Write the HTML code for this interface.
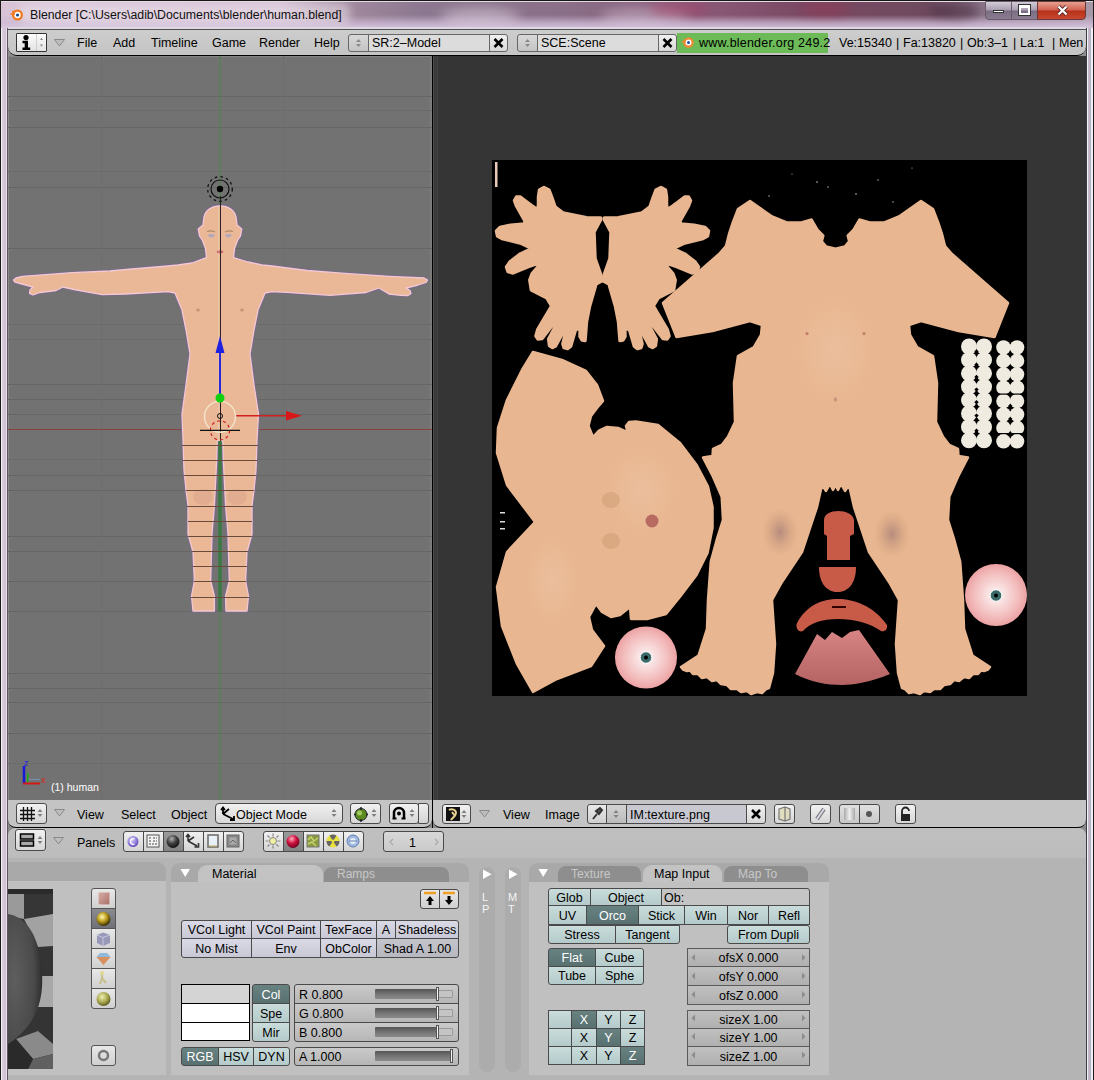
<!DOCTYPE html>
<html><head><meta charset="utf-8">
<style>
*{margin:0;padding:0;box-sizing:border-box}
html,body{width:1094px;height:1080px;overflow:hidden;background:#c0b0c0;font-family:"Liberation Sans",sans-serif;font-size:12px;color:#000}
.a{position:absolute}
.t{position:absolute;white-space:nowrap;line-height:14px}
.b{position:absolute;border:1px solid #555;text-align:center;line-height:16px;white-space:nowrap;overflow:hidden}
</style></head><body>
<!-- title bar -->
<div class="a" id="title" style="left:0;top:0;width:1094px;height:30px;background:linear-gradient(90deg,#d8c4d6 0px,#d4bcd0 280px,#a48ca0 340px,#8c7890 420px,#8a7088 560px,#8a5a78 700px,#7a4a64 800px,#6e4a5e 930px,#8a7488 980px,#a898a8 1094px)"></div>
<div class="a" style="left:0;top:15px;width:1094px;height:13px;background:linear-gradient(180deg,rgba(210,190,215,0) 0,rgba(205,185,212,.75) 60%,rgba(215,200,225,.9) 100%)"></div>
<div class="a" style="left:20px;top:3px;width:330px;height:22px;background:rgba(235,225,235,.55);filter:blur(4px);border-radius:8px"></div>
<div class="a" style="left:440px;top:8px;width:80px;height:18px;background:rgba(225,212,228,.55);filter:blur(6px);border-radius:50%"></div>
<div class="a" style="left:600px;top:8px;width:90px;height:18px;background:rgba(225,210,228,.45);filter:blur(6px);border-radius:50%"></div>
<div class="a" style="left:650px;top:2px;width:60px;height:14px;background:rgba(170,60,100,.45);filter:blur(5px);border-radius:50%"></div>
<div class="a" style="left:800px;top:2px;width:50px;height:14px;background:rgba(160,50,80,.4);filter:blur(5px);border-radius:50%"></div>
<div class="a" style="left:930px;top:3px;width:50px;height:16px;background:rgba(60,30,50,.45);filter:blur(5px);border-radius:50%"></div>
<div class="a" style="left:0;top:0;width:1094px;height:1px;background:#161616"></div>
<div class="a" style="left:1px;top:1px;width:1092px;height:1px;background:#e6dce6"></div>
<div class="a" style="left:8px;top:27px;width:1078px;height:2px;background:#ded6e2"></div>
<!-- frame -->
<div class="a" style="left:0;top:0;width:1px;height:1080px;background:#1a1a1a"></div>
<div class="a" style="left:1px;top:28px;width:7px;height:1052px;background:linear-gradient(90deg,#f4f0f6 0,#f4f0f6 1px,#dcd0de 1px,#d0bcd0 5px,#ece4ee 5px,#ece4ee 6px,#5a5060 6px)"></div>
<div class="a" style="left:1086px;top:28px;width:7px;height:1052px;background:linear-gradient(90deg,#3a3a40 0,#3a3a40 1px,#f4f2f6 1px,#f4f2f6 2px,#c4bccc 2px,#b8b0c0 5px,#f4eef8 5px)"></div>
<div class="a" style="left:1093px;top:0;width:1px;height:1080px;background:#1a1a1a"></div>
<!-- top header -->
<div class="a" style="left:8px;top:46px;width:1078px;height:10px;background:#8e8e8e"></div>
<div class="a" id="hdr1" style="left:8px;top:29px;width:1078px;height:27px;background:linear-gradient(#cdcdcd,#c4c4c4);border-top:1px solid #505050;border-bottom:1px solid #000;border-radius:0 0 9px 9px"></div>
<div class="a" style="left:16px;top:33px;width:31px;height:19px;border:1px solid #333;border-radius:1px;background:linear-gradient(#fafafa,#e4e4e4)"></div>
<div class="a" style="left:36px;top:34px;width:1px;height:17px;background:#d0d0d0"></div>
<svg class="a" style="left:16px;top:33px" width="31" height="19"><circle cx="10" cy="4.6" r="2.6" fill="#000"/><path d="M6.5 7.8h5.5v6.8h2.2v2.4H6.5v-2.4h2.2v-4.4H6.5z" fill="#000"/><path d="M24 7l1.5-2.2 1.5 2.2zM24 11.5l1.5 2.2 1.5-2.2z" fill="#888"/></svg>
<svg class="a" style="left:54px;top:39px" width="11" height="8"><path d="M0.5 0.5H10.5L5.5 7Z" fill="#bdbdbd" stroke="#8a8a8a" stroke-width="1"/></svg>
<div class="t" style="left:77px;top:36px;font-size:12.5px;color:#000;">File</div>
<div class="t" style="left:113px;top:36px;font-size:12.5px;color:#000;">Add</div>
<div class="t" style="left:151px;top:36px;font-size:12.5px;color:#000;">Timeline</div>
<div class="t" style="left:212px;top:36px;font-size:12.5px;color:#000;">Game</div>
<div class="t" style="left:259px;top:36px;font-size:12.5px;color:#000;">Render</div>
<div class="t" style="left:314px;top:36px;font-size:12.5px;color:#000;">Help</div>
<div class="a" style="left:348px;top:34px;width:21px;height:18px;border:1px solid #666;border-radius:3px 0 0 3px;background:linear-gradient(#d8d8d8,#c4c4c4)"></div><svg class="a" style="left:348px;top:34px" width="21" height="18"><path d="M8 8l2.5-3 2.5 3zM8 10l2.5 3 2.5-3z" fill="#8a8a8a"/></svg><div class="a" style="left:368px;top:34px;width:122px;height:18px;border:1px solid #666;background:#dcdcdc"></div><div class="t" style="left:372px;top:36px;font-size:12.5px;color:#000;">SR:2–Model</div><div class="a" style="left:489px;top:34px;width:19px;height:18px;border:1px solid #666;border-radius:0 3px 3px 0;background:linear-gradient(#f0f0f0,#d8d8d8)"></div><svg class="a" style="left:489px;top:34px" width="19" height="18"><path d="M5.5 5l8 8M13.5 5l-8 8" stroke="#000" stroke-width="2.6"/></svg>
<div class="a" style="left:517px;top:34px;width:21px;height:18px;border:1px solid #666;border-radius:3px 0 0 3px;background:linear-gradient(#d8d8d8,#c4c4c4)"></div><svg class="a" style="left:517px;top:34px" width="21" height="18"><path d="M8 8l2.5-3 2.5 3zM8 10l2.5 3 2.5-3z" fill="#8a8a8a"/></svg><div class="a" style="left:537px;top:34px;width:122px;height:18px;border:1px solid #666;background:#dcdcdc"></div><div class="t" style="left:541px;top:36px;font-size:12.5px;color:#000;">SCE:Scene</div><div class="a" style="left:658px;top:34px;width:19px;height:18px;border:1px solid #666;border-radius:0 3px 3px 0;background:linear-gradient(#f0f0f0,#d8d8d8)"></div><svg class="a" style="left:658px;top:34px" width="19" height="18"><path d="M5.5 5l8 8M13.5 5l-8 8" stroke="#000" stroke-width="2.6"/></svg>
<div class="a" style="left:677px;top:33px;width:151px;height:20px;background:#6cba58"></div>
<svg class="a" style="left:680px;top:35px" width="16" height="16"><circle cx="8.5" cy="7.5" r="5.2" fill="#f08a30"/><circle cx="8.5" cy="7.5" r="3" fill="#fff"/><circle cx="8.5" cy="7.5" r="1.5" fill="#2050a0"/><path d="M2 6.5h4" stroke="#f08a30" stroke-width="1.6"/></svg>
<div class="t" style="left:699px;top:36px;font-size:12.5px;color:#000;letter-spacing:0.2px">www.blender.org 249.2</div>
<div class="t" style="left:839px;top:36px;font-size:12.5px;color:#000;">Ve:15340</div>
<div class="t" style="left:896px;top:36px;font-size:12.5px;color:#000;">|</div>
<div class="t" style="left:903px;top:36px;font-size:12.5px;color:#000;">Fa:13820</div>
<div class="t" style="left:960px;top:36px;font-size:12.5px;color:#000;">|</div>
<div class="t" style="left:967px;top:36px;font-size:12.5px;color:#000;">Ob:3–1</div>
<div class="t" style="left:1013px;top:36px;font-size:12.5px;color:#000;">|</div>
<div class="t" style="left:1020px;top:36px;font-size:12.5px;color:#000;">La:1</div>
<div class="t" style="left:1052px;top:36px;font-size:12.5px;color:#000;">|</div>
<div class="t" style="left:1059px;top:36px;font-size:12.5px;color:#000;">Men</div>
<!-- left 3D viewport -->
<div class="a" id="v3d" style="left:8px;top:56px;width:424px;height:744px;background:#727272"></div>
<div class="a" style="left:432px;top:56px;width:1px;height:772px;background:#000"></div>
<div class="a" style="left:8px;top:56px;width:1px;height:744px;background:#8a8a8a"></div><div class="a" style="left:8px;top:56px;width:424px;height:1px;background:#868686"></div><div class="a" style="left:430px;top:56px;width:2px;height:744px;background:#7c7c7c"></div>

<!-- 3D viewport content -->
<svg class="a" style="left:0;top:0" width="1094" height="1080" viewBox="0 0 1094 1080">
<defs><clipPath id="cv"><rect x="8" y="56" width="424" height="744"/></clipPath></defs>
<g clip-path="url(#cv)">
<g stroke="#666" stroke-width="1" fill="none">
<path d="M8 96.5H432M8 127.5H432M8 187.5H432M8 248.5H432M8 384.5H432M8 399.5H432M8 414.5H432M8 475.5H432M8 490.5H432M8 536.5H432M8 551.5H432M8 581.5H432M8 611.5H432M8 673.5H432M8 688.5H432M8 702.5H432M8 733.5H432"/>
</g>
<path d="M8 110.5H432M8 171.5H432M8 324.5H432M8 339.5H432M8 459.5H432M8 763.5H432" stroke="#6b6b6b" stroke-width="1"/>
<path d="M101.5 56V800M283.5 56V800" stroke="#6e6e6e" stroke-width="1"/>
<path d="M8 429.5H432" stroke="#8a4040" stroke-width="1"/>
<path d="M220 56V800" stroke="#4a884a" stroke-width="1.1" opacity=".85"/>
<path fill="none" stroke="#7a6a8c" stroke-width="3" stroke-linejoin="round" d="M220,205.8 C228,205.8 234.5,210 236,217 L237,225 L241.8,229 L240.5,236 L237.5,240.5 L234.5,248.5 L233.5,257.6 L248,262 L262,265 L272,266 L307,270.5 L345,273.4 L389,276.3 L424,278 L427.5,280 L426,282.5 L418,285 L406,288 L410,290.5 L411,293.5 L408,295.5 L400.7,295.3 L389,294 L379,288 L366,292.5 L330,295.3 L287,292.4 L272,291.7 L265,293 L258,310 L254,330 L250,354 L254,385 L258.5,414 L257,440 L256,470 L254,490 L252,506 L252,534 L247,552 L245.6,581 L248.5,596 L247,611 L226,611 L225.6,596 L229.3,581 L228.5,552 L228,534 L225.6,506 L223.3,460 L222.8,441 L217.2,441 L216.7,460 L214.4,506 L212,534 L211.5,552 L210.7,581 L214.4,596 L214.4,611 L193,611 L191.5,596 L194.4,581 L193,552 L188,534 L188,506 L186,490 L184,470 L183,440 L182,414 L186,385 L190,354 L186,330 L182,310 L175,293 L168,291.7 L125,294 L102,294.6 L74,289.5 L63,287 L56,290.5 L40,292.5 L33,295 L29.5,293.5 L30,290 L33,287 L22,284 L15,282 L13.5,280 L16,278 L22.6,276.3 L72,272.7 L110,271 L132,269 L168,266 L178,265 L192,263 L206.5,257.6 L205.5,248.5 L202.5,240.5 L199.5,236 L198.2,229 L203,225 L204,217 C205.5,210 212,205.8 220,205.8 Z"/>
<path id="body" fill="#eab896" stroke="#f2c8d2" stroke-width="1.3" stroke-linejoin="round" d="M220,205.8 C228,205.8 234.5,210 236,217 L237,225 L241.8,229 L240.5,236 L237.5,240.5 L234.5,248.5 L233.5,257.6 L248,262 L262,265 L272,266 L307,270.5 L345,273.4 L389,276.3 L424,278 L427.5,280 L426,282.5 L418,285 L406,288 L410,290.5 L411,293.5 L408,295.5 L400.7,295.3 L389,294 L379,288 L366,292.5 L330,295.3 L287,292.4 L272,291.7 L265,293 L258,310 L254,330 L250,354 L254,385 L258.5,414 L257,440 L256,470 L254,490 L252,506 L252,534 L247,552 L245.6,581 L248.5,596 L247,611 L226,611 L225.6,596 L229.3,581 L228.5,552 L228,534 L225.6,506 L223.3,460 L222.8,441 L217.2,441 L216.7,460 L214.4,506 L212,534 L211.5,552 L210.7,581 L214.4,596 L214.4,611 L193,611 L191.5,596 L194.4,581 L193,552 L188,534 L188,506 L186,490 L184,470 L183,440 L182,414 L186,385 L190,354 L186,330 L182,310 L175,293 L168,291.7 L125,294 L102,294.6 L74,289.5 L63,287 L56,290.5 L40,292.5 L33,295 L29.5,293.5 L30,290 L33,287 L22,284 L15,282 L13.5,280 L16,278 L22.6,276.3 L72,272.7 L110,271 L132,269 L168,266 L178,265 L192,263 L206.5,257.6 L205.5,248.5 L202.5,240.5 L199.5,236 L198.2,229 L203,225 L204,217 C205.5,210 212,205.8 220,205.8 Z"/>
<ellipse cx="203" cy="497" rx="10" ry="8" fill="#c89080" opacity=".28"/><ellipse cx="237" cy="497" rx="10" ry="8" fill="#c89080" opacity=".28"/>
<rect x="218.3" y="441" width="3.4" height="170" fill="#3a7a42"/>
<g stroke="#6a4a3a" stroke-width="1"><path d="M182 445.5H258M183 460.5H257M184 475.5H256M186 490.5H254M187 506.5H253M188 521.5H252M188 536.5H252M192 551.5H248M193 566.5H247M194 581.5H246M191 597.5H249"/></g>
<ellipse cx="211.4" cy="235.6" rx="3.2" ry="1.8" fill="#a8a4c0" opacity=".8"/><ellipse cx="228.4" cy="235.6" rx="3.2" ry="1.8" fill="#a8a4c0" opacity=".8"/><path d="M207 231.5Q211 230 215 232M225 232Q229 230 233 231.5" stroke="#b08868" stroke-width="1.2" fill="none"/>
<ellipse cx="220" cy="251.8" rx="3.2" ry="1.6" fill="#c05060" opacity=".85"/>
<ellipse cx="198" cy="310" rx="2" ry="1.6" fill="#c08c70" opacity=".8"/><ellipse cx="242" cy="310" rx="2" ry="1.6" fill="#c08c70" opacity=".8"/>
<path d="M218.8 206V441" stroke="#f4dcc4" stroke-width="1" opacity=".4"/><path d="M220.5 196V441" stroke="#2a2020" stroke-width="1"/>
<circle cx="220" cy="189" r="12.3" fill="none" stroke="#111" stroke-width="1.3" stroke-dasharray="2.6 3.2"/>
<circle cx="220" cy="189" r="9" fill="none" stroke="#111" stroke-width="1.2"/>
<circle cx="220" cy="189" r="3.2" fill="#000"/>
<path d="M220 353V397" stroke="#2828d8" stroke-width="2"/>
<path d="M220 336L215.5 353L224.5 353Z" fill="#2020e0"/>
<path d="M235 415.7H287" stroke="#d02020" stroke-width="1.5"/>
<path d="M302 415.7L286 411L286 420.4Z" fill="#d81818"/>
<circle cx="220" cy="416.7" r="15.5" fill="none" stroke="#f2e2c8" stroke-width="1.5"/>
<circle cx="220" cy="398" r="4.5" fill="#10d010"/>
<circle cx="220" cy="416" r="2.5" fill="none" stroke="#111" stroke-width="1"/>
<circle cx="220" cy="430.4" r="9.6" fill="none" stroke="#d02020" stroke-width="1.2" stroke-dasharray="3 3"/>
<path d="M200 430.4H240" stroke="#111" stroke-width="1.3"/>
<path d="M24 766V784" stroke="#1818d8" stroke-width="2.5" fill="none"/>
<path d="M23 783.5H40" stroke="#d01818" stroke-width="2"/><path d="M29 779.5H40" stroke="#7890b0" stroke-width="1.2"/>
<path d="M27.7 773V782" stroke="#18b018" stroke-width="1.5"/>
</g>
</svg>
<div class="t" style="left:51px;top:780px;color:#fff;font-size:10.5px">(1) human</div>
<div class="t" style="left:24px;top:756px;color:#2020e0;font-size:9px">z</div>
<div class="t" style="left:41px;top:773px;color:#e02020;font-size:9px">x</div>

<!-- right image viewport -->
<div class="a" id="vimg" style="left:433px;top:56px;width:653px;height:744px;background:#353535"></div>
<div class="a" style="left:433px;top:56px;width:5px;height:744px;background:linear-gradient(90deg,#505050 0,#505050 1px,#3a3a3a 1px,#3a3a3a 4px,#424242 4px)"></div>

<!-- texture -->
<svg class="a" style="left:492px;top:160px" width="535" height="536" viewBox="0 0 535 536">
<defs>
<radialGradient id="eye" cx="50%" cy="50%" r="50%"><stop offset="0" stop-color="#ffffff"/><stop offset="0.22" stop-color="#fae6e6"/><stop offset="0.75" stop-color="#f2baba"/><stop offset="1" stop-color="#eca2a4"/></radialGradient>
<radialGradient id="knee" cx="50%" cy="50%" r="50%"><stop offset="0" stop-color="#a88078" stop-opacity=".8"/><stop offset="1" stop-color="#c89878" stop-opacity="0"/></radialGradient>
<radialGradient id="hl" cx="50%" cy="50%" r="50%"><stop offset="0" stop-color="#f2ccb0" stop-opacity=".35"/><stop offset="1" stop-color="#f4d0b4" stop-opacity="0"/></radialGradient>
<linearGradient id="fan" x1="0" y1="0" x2="0" y2="1"><stop offset="0" stop-color="#d88484"/><stop offset="1" stop-color="#b46262"/></linearGradient>
</defs>
<rect width="535" height="536" fill="#000"/>
<g fill="#e8b690" stroke="#e8b690" stroke-linejoin="round">
<path stroke-width="3.5" d="M108.7,58.0 L94.5,57.8 L70.9,53.0 L63.0,46.8 L60.0,38.0 L57.0,30.0 L52.0,27.5 L47.5,30.0 L46.5,37.0 L46.5,44.0 L46.0,50.0 L40.0,46.0 L34.6,42.0 L28.0,37.0 L24.5,37.0 L22.5,40.5 L24.5,46.0 L33.0,61.0 L32.5,64.0 L18.9,65.2 L8.0,67.5 L4.5,71.0 L5.5,76.0 L10.0,78.5 L28.3,83.0 L40.0,88.5 L28.3,94.0 L18.0,102.0 L14.5,107.0 L16.0,111.5 L21.0,113.0 L36.2,106.6 L50.4,101.9 L40.0,114.0 L37.8,120.0 L39.4,130.0 L55.0,138.0 L59.8,146.0 L45.7,169.6 L44.0,176.0 L46.0,179.0 L50.0,178.5 L63.0,161.7 L66.0,161.7 L56.7,179.0 L57.5,185.5 L60.5,187.5 L63.5,186.0 L72.4,169.6 L74.0,171.0 L70.9,183.8 L72.0,187.5 L75.5,188.5 L78.7,186.0 L83.5,169.6 L88.2,168.0 L88.0,176.5 L90.0,180.0 L93.0,180.6 L94.5,161.7 L97.6,146.0 L104.0,124.0 L110.0,120.8 L108.7,114.5 L103.0,98.7 L102.0,72.0 L108.7,59.4 Z"/><path stroke-width="3.5" d="M112.3,58.0 L126.5,57.8 L150.1,53.0 L158.0,46.8 L161.0,38.0 L164.0,30.0 L169.0,27.5 L173.5,30.0 L174.5,37.0 L174.5,44.0 L175.0,50.0 L181.0,46.0 L186.4,42.0 L193.0,37.0 L196.5,37.0 L198.5,40.5 L196.5,46.0 L188.0,61.0 L188.5,64.0 L202.1,65.2 L213.0,67.5 L216.5,71.0 L215.5,76.0 L211.0,78.5 L192.7,83.0 L181.0,88.5 L192.7,94.0 L203.0,102.0 L206.5,107.0 L205.0,111.5 L200.0,113.0 L184.8,106.6 L170.6,101.9 L181.0,114.0 L183.2,120.0 L181.6,130.0 L166.0,138.0 L161.2,146.0 L175.3,169.6 L177.0,176.0 L175.0,179.0 L171.0,178.5 L158.0,161.7 L155.0,161.7 L164.3,179.0 L163.5,185.5 L160.5,187.5 L157.5,186.0 L148.6,169.6 L147.0,171.0 L150.1,183.8 L149.0,187.5 L145.5,188.5 L142.3,186.0 L137.5,169.6 L132.8,168.0 L133.0,176.5 L131.0,180.0 L128.0,180.6 L126.5,161.7 L123.4,146.0 L117.0,124.0 L111.0,120.8 L112.3,114.5 L118.0,98.7 L119.0,72.0 L112.3,59.4 Z"/><path stroke-width="2.5" d="M343.5,88.7 L352.8,86.5 L357.2,81.4 L355.7,75.6 L361.6,69.7 L367.4,59.5 L377.6,62.4 L392.3,62.4 L406.9,56.5 L421.5,46.3 L429.0,41.0 L441.0,49.0 L446.0,62.0 L450.0,74.0 L453.0,86.0 L460.0,94.0 L516.0,143.0 L502.5,177.0 L466.5,171.0 L429.0,161.0 L417.0,165.0 L418.0,175.0 L425.0,187.0 L441.0,196.0 L445.0,223.0 L444.0,262.0 L451.0,276.7 L457.3,285.0 L466.0,289.0 L466.5,296.0 L476.0,297.5 L466.0,316.7 L457.3,336.7 L456.0,360.0 L462.3,380.0 L468.2,401.7 L471.0,440.0 L472.0,469.0 L480.5,495.6 L498.0,507.0 L496.0,509.5 L492.0,511.0 L489.0,510.5 L486.0,514.0 L481.0,514.0 L477.0,518.0 L472.0,517.0 L467.0,521.0 L462.0,520.0 L458.0,524.0 L452.0,525.0 L448.0,529.0 L442.0,529.0 L438.0,532.0 L432.0,531.0 L428.0,534.0 L422.0,532.0 L417.0,533.0 L413.0,529.0 L410.0,528.0 L406.0,513.0 L404.0,484.0 L407.0,440.0 L397.0,422.0 L377.0,392.0 L362.0,347.0 L357.0,325.0 L353.0,331.0 L349.0,324.0 L346.0,330.0 L343.5,325.0 L341.0,330.0 L338.0,324.0 L334.0,331.0 L330.0,325.0 L325.0,347.0 L310.0,392.0 L290.0,422.0 L280.0,440.0 L283.0,484.0 L281.0,513.0 L277.0,528.0 L274.0,529.0 L270.0,533.0 L265.0,532.0 L259.0,534.0 L255.0,531.0 L249.0,532.0 L245.0,529.0 L239.0,529.0 L235.0,525.0 L229.0,524.0 L225.0,520.0 L220.0,521.0 L215.0,517.0 L210.0,518.0 L206.0,514.0 L201.0,514.0 L198.0,510.5 L195.0,511.0 L191.0,509.5 L189.0,507.0 L206.5,495.6 L215.0,469.0 L216.0,440.0 L218.8,401.7 L224.7,380.0 L231.0,360.0 L229.7,336.7 L221.0,316.7 L211.0,297.5 L220.5,296.0 L221.0,289.0 L229.7,285.0 L236.0,276.7 L243.0,262.0 L242.0,223.0 L246.0,196.0 L262.0,187.0 L269.0,175.0 L270.0,165.0 L258.0,161.0 L220.5,171.0 L184.5,177.0 L171.0,143.0 L227.0,94.0 L234.0,86.0 L237.0,74.0 L241.0,62.0 L246.0,49.0 L258.0,41.0 L265.5,46.3 L280.1,56.5 L294.7,62.4 L309.4,62.4 L319.6,59.5 L325.4,69.7 L331.3,75.6 L329.8,81.4 L334.2,86.5 Z"/><path stroke-width="2.5" d="M41.0,192.0 L70.0,200.0 L94.0,211.0 L105.0,225.0 L111.0,241.0 L105.0,248.0 L99.0,256.0 L96.5,266.0 L101.0,277.0 L106.5,271.0 L115.0,267.0 L126.0,268.0 L135.0,272.0 L137.0,278.0 L134.0,266.0 L137.0,262.0 L144.0,261.5 L166.0,265.0 L188.0,283.0 L204.7,305.0 L216.0,326.7 L220.5,346.7 L220.5,368.0 L215.5,393.0 L204.5,415.0 L188.0,436.7 L174.0,454.0 L155.0,459.0 L139.0,459.0 L138.0,447.0 L128.0,455.0 L119.0,457.0 L110.0,452.0 L104.0,444.0 L97.0,457.0 L100.0,470.0 L112.0,486.0 L99.0,506.0 L65.0,519.0 L41.0,532.0 L25.0,504.0 L10.0,466.0 L5.0,427.0 L15.0,392.0 L43.0,362.0 L15.0,325.0 L5.0,293.0 L6.0,268.0 L15.0,240.0 L30.0,210.0 Z"/>
</g>
<ellipse cx="343" cy="190" rx="45" ry="60" fill="url(#hl)"/>
<ellipse cx="150" cy="330" rx="40" ry="50" fill="url(#hl)"/>
<ellipse cx="60" cy="420" rx="30" ry="50" fill="url(#hl)"/>
<ellipse cx="288" cy="372" rx="18" ry="24" fill="url(#knee)"/>
<ellipse cx="400" cy="374" rx="18" ry="24" fill="url(#knee)"/>
<ellipse cx="119" cy="340" rx="9" ry="8" fill="#d0a078" opacity=".6"/>
<ellipse cx="119" cy="381" rx="9" ry="8" fill="#d0a078" opacity=".6"/>
<circle cx="160" cy="361" r="6.5" fill="#b86a60"/>
<circle cx="315" cy="173.6" r="1.6" fill="#b87060" opacity=".8"/><circle cx="372" cy="173.6" r="1.6" fill="#b87060" opacity=".8"/><ellipse cx="343.4" cy="239.5" rx="1.5" ry="2.2" fill="#b88070" opacity=".7"/>
<path d="M332,360 C332,348 360,348 362,360 L362,374 L358,376 L358,400 L335,400 L335,376 L332,374 Z" fill="#c85a48"/>
<path d="M327,407 L364,407 C364,425 355,432 345.5,432 C336,432 327,425 327,407 Z" fill="#c85a48"/>
<path d="M305,463 C315,445 330,439 346,439 C362,439 382,446 395,465 C396,470 392,472 389,471 C378,463 362,459 346,459 C330,459 318,463 311,471 C307,473 303,468 305,463 Z" fill="#c85a48"/><rect x="340" y="446" width="14" height="2" fill="#300"/>
<path d="M325,474 L333,480 L340,472 L350,478 L358,472 L367,470 L398,514 C380,522 360,525 350,525 C335,525 318,522 303,514 Z" fill="url(#fan)"/>
<circle cx="154" cy="497.5" r="31" fill="url(#eye)"/>
<circle cx="154" cy="497.5" r="5.8" fill="#3a6a6a" stroke="#fff" stroke-width="1"/><circle cx="154" cy="497.5" r="2" fill="#000"/>
<circle cx="504" cy="435" r="31" fill="url(#eye)"/>
<circle cx="504" cy="435.5" r="5.8" fill="#3a6a6a" stroke="#fff" stroke-width="1"/><circle cx="504" cy="435.5" r="2" fill="#000"/>
<g fill="#f0ebe0"><circle cx="477" cy="186.5" r="8"/><circle cx="492" cy="186.5" r="8"/><circle cx="477" cy="199.9" r="8"/><circle cx="492" cy="199.9" r="8"/><circle cx="477" cy="213.3" r="8"/><circle cx="492" cy="213.3" r="8"/><circle cx="477" cy="226.7" r="8"/><circle cx="492" cy="226.7" r="8"/><circle cx="477" cy="240.1" r="8"/><circle cx="492" cy="240.1" r="8"/><circle cx="477" cy="253.5" r="8"/><circle cx="492" cy="253.5" r="8"/><circle cx="477" cy="266.9" r="8"/><circle cx="492" cy="266.9" r="8"/><circle cx="477" cy="280.3" r="8"/><circle cx="492" cy="280.3" r="8"/><circle cx="511.5" cy="187.5" r="7.3"/><circle cx="525" cy="187.5" r="7.3"/><circle cx="511.5" cy="200.9" r="7.3"/><circle cx="525" cy="200.9" r="7.3"/><circle cx="511.5" cy="214.3" r="7.3"/><circle cx="525" cy="214.3" r="7.3"/><circle cx="511.5" cy="227.7" r="7.3"/><circle cx="525" cy="227.7" r="7.3"/><circle cx="511.5" cy="241.1" r="7.3"/><circle cx="525" cy="241.1" r="7.3"/><circle cx="511.5" cy="254.5" r="7.3"/><circle cx="525" cy="254.5" r="7.3"/><circle cx="511.5" cy="267.9" r="7.3"/><circle cx="525" cy="267.9" r="7.3"/><circle cx="511.5" cy="281.3" r="7.3"/><circle cx="525" cy="281.3" r="7.3"/></g><g fill="#000"><path d="M484.5 189.20000000000002L486.7 191.4L484.5 193.6L482.3 191.4Z"/><path d="M484.5 202.5L486.7 204.7L484.5 206.89999999999998L482.3 204.7Z"/><path d="M484.5 214.70000000000002L486.7 216.9L484.5 219.1L482.3 216.9Z"/><path d="M484.5 227.4L486.7 229.6L484.5 231.79999999999998L482.3 229.6Z"/><path d="M484.5 240.10000000000002L486.7 242.3L484.5 244.5L482.3 242.3Z"/><path d="M484.5 253.4L486.7 255.6L484.5 257.8L482.3 255.6Z"/><path d="M484.5 268.5L486.7 270.7L484.5 272.9L482.3 270.7Z"/><path d="M518.3 191.8L520.5 194L518.3 196.2L516.1 194Z"/><path d="M518.3 204.8L520.5 207L518.3 209.2L516.1 207Z"/><path d="M518.3 218.8L520.5 221L518.3 223.2L516.1 221Z"/><path d="M518.3 243.8L520.5 246L518.3 248.2L516.1 246Z"/><path d="M518.3 256.8L520.5 259L518.3 261.2L516.1 259Z"/><rect x="503" y="233.5" width="32" height="1.2"/><rect x="503" y="273" width="32" height="1.2"/></g>
<rect x="3" y="2" width="2.5" height="25" fill="#e8c8b8"/><g fill="#c8c0c0"><circle cx="325" cy="22" r=".8"/><circle cx="336" cy="27" r=".7"/><circle cx="364" cy="34" r=".8"/><circle cx="386" cy="20" r=".7"/><circle cx="401" cy="42" r=".7"/><circle cx="277" cy="36" r=".7"/><circle cx="420" cy="8" r=".6"/><circle cx="300" cy="14" r=".6"/></g>
<rect x="8" y="352" width="5" height="1.5" fill="#ddd"/><rect x="8" y="361" width="5" height="1.5" fill="#ddd"/><rect x="8" y="368" width="5" height="1.5" fill="#ddd"/>
</svg>

<!-- headers -->
<!-- buttons window -->
<div class="a" style="left:8px;top:818px;width:1078px;height:30px;background:#8a8a8a"></div>
<div class="a" id="hdr3d2" style="left:8px;top:800px;width:424px;height:28px;background:#c4c4c4;border-bottom:1px solid #000;border-radius:0 0 8px 8px"></div>
<div class="a" id="hdrimg2" style="left:433px;top:800px;width:653px;height:28px;background:#c4c4c4;border-bottom:1px solid #000;border-radius:0 0 8px 8px"></div>
<div class="a" style="left:432px;top:800px;width:1px;height:28px;background:#000"></div>
<div class="a" id="btns" style="left:8px;top:828px;width:1078px;height:252px;background:#b4b4b4;border-radius:8px 8px 0 0"></div>
<div class="a" style="left:8px;top:828px;width:1078px;height:30px;background:linear-gradient(#c0c0c0,#bcbcbc);border-radius:8px 8px 0 0"></div>
<svg class="a" style="left:9px;top:7px" width="16" height="16"><circle cx="8.5" cy="8" r="5.5" fill="#f07a20"/><circle cx="8.5" cy="8" r="3.2" fill="#fff"/><circle cx="8.5" cy="8" r="1.6" fill="#204a90"/><path d="M1.5 7h4.5M3 4.5h4" stroke="#f07a20" stroke-width="1.5"/></svg>
<div class="t" style="left:30px;top:8px;font-size:12.3px;color:#101010">Blender [C:\Users\adib\Documents\blender\human.blend]</div>
<div class="a" style="left:985px;top:1px;width:27px;height:19px;border:1px solid #6a5a6a;border-radius:0 0 0 4px;background:linear-gradient(#d4ccd8,#a89cb0 48%,#7a6c82 52%,#8a7c90)"></div>
<div class="a" style="left:993px;top:10px;width:11px;height:3px;background:#fff;border:1px solid #333"></div>
<div class="a" style="left:1011px;top:1px;width:27px;height:19px;border:1px solid #6a5a6a;background:linear-gradient(#d4ccd8,#a89cb0 48%,#7a6c82 52%,#8a7c90)"></div>
<div class="a" style="left:1019px;top:5px;width:11px;height:10px;border:2px solid #fff;border-top-width:3px;outline:1px solid #333"></div>
<div class="a" style="left:1037px;top:1px;width:49px;height:19px;border:1px solid #6a3a3a;border-radius:0 0 4px 0;background:linear-gradient(#e8a090,#d06050 48%,#b83018 52%,#c84830)"></div>
<svg class="a" style="left:1055px;top:3px" width="16" height="15"><path d="M3.5 3.5l8 8M11.5 3.5l-8 8" stroke="#5a2a2a" stroke-width="4"/><path d="M3.5 3.5l8 8M11.5 3.5l-8 8" stroke="#fff" stroke-width="2.2"/></svg>
<div class="a" style="left:16px;top:803px;width:31px;height:21px;border:1px solid #4a4a4a;border-radius:3px;background:linear-gradient(#f2f2f2,#d6d6d6)"></div>
<svg class="a" style="left:18px;top:805px" width="20" height="18"><path d="M5.5 2V16M9.5 2V16M13.5 2V16M2 5.5H17M2 9.5H17M2 13.5H17" stroke="#111" stroke-width="1.3"/></svg>
<svg class="a" style="left:37px;top:807px" width="6" height="12"><path d="M0.5 5L3 2L5.5 5zM0.5 7L3 10L5.5 7z" fill="#808080"/></svg>
<svg class="a" style="left:54px;top:809px" width="11" height="8"><path d="M0.5 0.5H10.5L5.5 7Z" fill="#bdbdbd" stroke="#8a8a8a" stroke-width="1"/></svg>
<div class="t" style="left:77px;top:808px;font-size:12.5px;color:#000;">View</div>
<div class="t" style="left:121px;top:808px;font-size:12.5px;color:#000;">Select</div>
<div class="t" style="left:171px;top:808px;font-size:12.5px;color:#000;">Object</div>
<div class="a" style="left:215px;top:803px;width:128px;height:21px;border:1px solid #4a4a4a;border-radius:4px;background:linear-gradient(#f0f0f0,#d8d8d8)"></div>
<svg class="a" style="left:220px;top:806px" width="16" height="16"><path d="M3 2V8M1 4L3 1.5L5 4M3 8L13 13M10 14H14V10M3 8L9 3" stroke="#000" stroke-width="1.8" fill="none"/></svg>
<div class="t" style="left:236px;top:808px;font-size:12.5px;color:#000;">Object Mode</div>
<svg class="a" style="left:331px;top:807px" width="6" height="12"><path d="M0.5 5L3 2L5.5 5zM0.5 7L3 10L5.5 7z" fill="#808080"/></svg>
<div class="a" style="left:350px;top:803px;width:31px;height:21px;border:1px solid #4a4a4a;border-radius:3px;background:linear-gradient(#f2f2f2,#d6d6d6)"></div>
<svg class="a" style="left:352px;top:805px" width="18" height="18"><circle cx="9" cy="9.5" r="6" fill="#5a8a20" stroke="#223" stroke-width="1"/><circle cx="7.5" cy="8" r="2.5" fill="#a0c860"/><path d="M9 2V5M9 14V17M2 9.5H4M14 9.5H16" stroke="#222" stroke-width="1.5"/></svg>
<svg class="a" style="left:371px;top:807px" width="6" height="12"><path d="M0.5 5L3 2L5.5 5zM0.5 7L3 10L5.5 7z" fill="#808080"/></svg>
<div class="a" style="left:389px;top:803px;width:30px;height:21px;border:1px solid #4a4a4a;border-radius:3px;background:linear-gradient(#f2f2f2,#d6d6d6)"></div>
<svg class="a" style="left:391px;top:805px" width="16" height="16"><path d="M3 13V8A5 5 0 0 1 13 8V13" stroke="#000" stroke-width="2.5" fill="none"/><circle cx="8" cy="8.5" r="2" fill="#000"/><path d="M1.5 13.5h4M10.5 13.5h4" stroke="#000" stroke-width="1.8"/></svg>
<svg class="a" style="left:409px;top:807px" width="6" height="12"><path d="M0.5 5L3 2L5.5 5zM0.5 7L3 10L5.5 7z" fill="#808080"/></svg>
<div class="a" style="left:418px;top:803px;width:11px;height:21px;border:1px solid #4a4a4a;border-radius:0 3px 3px 0;background:linear-gradient(#eee,#d4d4d4)"></div>
<div class="a" style="left:442px;top:804px;width:29px;height:20px;border:1px solid #4a4a4a;border-radius:3px;background:linear-gradient(#f2f2f2,#d6d6d6)"></div>
<svg class="a" style="left:446px;top:807px" width="14" height="14"><rect width="14" height="14" fill="#111"/><path d="M3 3C6 1 10 3 10 6C10 9 6 11 5 13M6 5L9 9" stroke="#e8d090" stroke-width="2" fill="none"/></svg>
<svg class="a" style="left:461px;top:808px" width="6" height="12"><path d="M0.5 5L3 2L5.5 5zM0.5 7L3 10L5.5 7z" fill="#808080"/></svg>
<svg class="a" style="left:479px;top:810px" width="11" height="8"><path d="M0.5 0.5H10.5L5.5 7Z" fill="#bdbdbd" stroke="#8a8a8a" stroke-width="1"/></svg>
<div class="t" style="left:503px;top:808px;font-size:12.5px;color:#000;">View</div>
<div class="t" style="left:545px;top:808px;font-size:12.5px;color:#000;">Image</div>
<div class="a" style="left:587px;top:804px;width:20px;height:20px;border:1px solid #4a4a4a;border-radius:3px 0 0 3px;background:linear-gradient(#eaeaea,#cfcfcf)"></div>
<svg class="a" style="left:590px;top:806px" width="14" height="16"><path d="M3 13L7 8M6 5L10 2L12 4L9 8Z" stroke="#333" stroke-width="2" fill="#555"/></svg>
<div class="a" style="left:606px;top:804px;width:21px;height:20px;border:1px solid #4a4a4a;border-radius:0;background:linear-gradient(#d2d2d2,#bcbcbc)"></div>
<svg class="a" style="left:613px;top:808px" width="6" height="12"><path d="M0.5 5L3 2L5.5 5zM0.5 7L3 10L5.5 7z" fill="#808080"/></svg>
<div class="a" style="left:626px;top:804px;width:121px;height:20px;border:1px solid #4a4a4a;border-radius:0;background:#c8c8d0"></div>
<div class="t" style="left:630px;top:808px;font-size:12.5px;color:#000;">IM:texture.png</div>
<div class="a" style="left:746px;top:804px;width:20px;height:20px;border:1px solid #4a4a4a;border-radius:0 3px 3px 0;background:linear-gradient(#f0f0f0,#d8d8d8)"></div>
<svg class="a" style="left:746px;top:804px" width="20" height="20"><path d="M6 6l8 8M14 6l-8 8" stroke="#000" stroke-width="2.5"/></svg>
<div class="a" style="left:774px;top:804px;width:21px;height:20px;border:1px solid #4a4a4a;border-radius:3px;background:linear-gradient(#f2f2f2,#d6d6d6)"></div>
<svg class="a" style="left:777px;top:806px" width="15" height="16"><path d="M2 3L8 1V15L2 13ZM8 1L13 3V13L8 15" stroke="#777" stroke-width="1.2" fill="#e0dcc0"/></svg>
<div class="a" style="left:810px;top:804px;width:21px;height:20px;border:1px solid #4a4a4a;border-radius:3px;background:linear-gradient(#f2f2f2,#d6d6d6)"></div>
<svg class="a" style="left:813px;top:806px" width="15" height="16"><path d="M4 13L11 3" stroke="#777" stroke-width="4"/><path d="M4 13L11 3" stroke="#d8d8e8" stroke-width="2"/></svg>
<div class="a" style="left:839px;top:804px;width:21px;height:20px;border:1px solid #4a4a4a;border-radius:3px 0 0 3px;background:linear-gradient(#e0e0e0,#c8c8c8)"></div>
<div class="a" style="left:844px;top:808px;width:11px;height:12px;background:linear-gradient(90deg,#aaa,#eee,#aaa)"></div>
<div class="a" style="left:859px;top:804px;width:21px;height:20px;border:1px solid #4a4a4a;border-radius:0 3px 3px 0;background:linear-gradient(#e0e0e0,#c8c8c8)"></div>
<div class="a" style="left:866px;top:811px;width:6px;height:6px;border-radius:3px;background:#555"></div>
<div class="a" style="left:895px;top:804px;width:21px;height:20px;border:1px solid #4a4a4a;border-radius:3px;background:linear-gradient(#f2f2f2,#d6d6d6)"></div>
<svg class="a" style="left:898px;top:806px" width="15" height="16"><path d="M4 8V5A3.5 3.5 0 0 1 11 5" stroke="#222" stroke-width="1.8" fill="none"/><rect x="3" y="8" width="9" height="7" fill="#222"/></svg>
<div class="a" style="left:15px;top:829px;width:31px;height:22px;border:1px solid #4a4a4a;border-radius:3px;background:linear-gradient(#f2f2f2,#d6d6d6)"></div>
<svg class="a" style="left:19px;top:832px" width="16" height="16"><rect x="1.5" y="2" width="13" height="5" fill="#aaa" stroke="#000" stroke-width="1.5"/><rect x="1.5" y="9" width="13" height="5" fill="#aaa" stroke="#000" stroke-width="1.5"/></svg>
<svg class="a" style="left:37px;top:834px" width="6" height="12"><path d="M0.5 5L3 2L5.5 5zM0.5 7L3 10L5.5 7z" fill="#808080"/></svg>
<svg class="a" style="left:53px;top:837px" width="11" height="8"><path d="M0.5 0.5H10.5L5.5 7Z" fill="#bdbdbd" stroke="#8a8a8a" stroke-width="1"/></svg>
<div class="t" style="left:77px;top:836px;font-size:12.5px;color:#000;">Panels</div>
<div class="a" style="left:123px;top:831px;width:21px;height:21px;border:1px solid #4a4a4a;border-radius:3px 0 0 3px;background:linear-gradient(#f0f0f0,#d4d4d4)"></div>
<svg class="a" style="left:123px;top:831px" width="20" height="20"><defs><radialGradient id="ic1" cx="40%" cy="35%" r="65%"><stop offset="0" stop-color="#d8d0ff"/><stop offset="1" stop-color="#6a50c0"/></radialGradient></defs><circle cx="10" cy="10.5" r="5.5" fill="url(#ic1)"/><path d="M11.5 8A2.8 2.8 0 1 0 11.5 13" stroke="#fff" stroke-width="1.3" fill="none"/></svg>
<div class="a" style="left:143px;top:831px;width:21px;height:21px;border:1px solid #4a4a4a;border-radius:0;background:linear-gradient(#f0f0f0,#d4d4d4)"></div>
<svg class="a" style="left:143px;top:831px" width="20" height="20"><rect x="4" y="4" width="12" height="12" fill="#f4f4f4" stroke="#555" stroke-width="1"/><path d="M6 7h3M10 7h4M6 10h3M10 10h4M6 13h8" stroke="#444" stroke-width="1.2" stroke-dasharray="2 1"/></svg>
<div class="a" style="left:163px;top:831px;width:21px;height:21px;border:1px solid #4a4a4a;border-radius:0;background:linear-gradient(#9a9a9a,#828282)"></div>
<svg class="a" style="left:163px;top:831px" width="20" height="20"><defs><radialGradient id="ic3" cx="40%" cy="30%" r="70%"><stop offset="0" stop-color="#b0b0b0"/><stop offset=".5" stop-color="#444"/><stop offset="1" stop-color="#111"/></radialGradient></defs><circle cx="10" cy="10.5" r="6.5" fill="url(#ic3)"/></svg>
<div class="a" style="left:183px;top:831px;width:21px;height:21px;border:1px solid #4a4a4a;border-radius:0;background:linear-gradient(#f0f0f0,#d4d4d4)"></div>
<svg class="a" style="left:183px;top:831px" width="20" height="20"><path d="M5 4V10M3 6L5 3.5L7 6M5 10L14 15M11.5 16H15.5V12M5 10L11 6" stroke="#333" stroke-width="1.6" fill="none"/></svg>
<div class="a" style="left:203px;top:831px;width:21px;height:21px;border:1px solid #4a4a4a;border-radius:0;background:linear-gradient(#f0f0f0,#d4d4d4)"></div>
<svg class="a" style="left:203px;top:831px" width="20" height="20"><rect x="5" y="4" width="10" height="12" fill="#e8f0f8" stroke="#707070" stroke-width="1.6"/><path d="M6 15L14 15" stroke="#c8b060" stroke-width="1"/></svg>
<div class="a" style="left:223px;top:831px;width:21px;height:21px;border:1px solid #4a4a4a;border-radius:0 3px 3px 0;background:linear-gradient(#f0f0f0,#d4d4d4)"></div>
<svg class="a" style="left:223px;top:831px" width="20" height="20"><rect x="4" y="4" width="12" height="12" fill="#888" stroke="#666"/><rect x="6.5" y="6.5" width="7" height="7" fill="#aaa"/><path d="M7 12L10 9L13 12" stroke="#666" fill="none"/></svg>
<div class="a" style="left:263px;top:831px;width:21px;height:21px;border:1px solid #4a4a4a;border-radius:3px 0 0 3px;background:linear-gradient(#f0f0f0,#d4d4d4)"></div>
<svg class="a" style="left:263px;top:831px" width="20" height="20"><circle cx="10" cy="10" r="3.5" fill="#f0f0a0" stroke="#888"/><path d="M10 2.5V5.5M10 14.5V17.5M2.5 10H5.5M14.5 10H17.5M4.5 4.5L6.5 6.5M13.5 13.5L15.5 15.5M4.5 15.5L6.5 13.5M13.5 6.5L15.5 4.5" stroke="#888" stroke-width="1.2"/></svg>
<div class="a" style="left:283px;top:831px;width:21px;height:21px;border:1px solid #4a4a4a;border-radius:0;background:linear-gradient(#9a9a9a,#828282)"></div>
<svg class="a" style="left:283px;top:831px" width="20" height="20"><defs><radialGradient id="ic8" cx="40%" cy="30%" r="70%"><stop offset="0" stop-color="#ffb0c0"/><stop offset=".5" stop-color="#d01040"/><stop offset="1" stop-color="#700020"/></radialGradient></defs><circle cx="10" cy="10.5" r="6.5" fill="url(#ic8)"/></svg>
<div class="a" style="left:303px;top:831px;width:21px;height:21px;border:1px solid #4a4a4a;border-radius:0;background:linear-gradient(#f0f0f0,#d4d4d4)"></div>
<svg class="a" style="left:303px;top:831px" width="20" height="20"><rect x="4" y="4" width="12" height="12" fill="#8a9a40" stroke="#777"/><path d="M5 9L8 6L11 10L15 7M5 13L9 11L13 15" stroke="#c8d070" stroke-width="1.5" fill="none"/></svg>
<div class="a" style="left:323px;top:831px;width:21px;height:21px;border:1px solid #4a4a4a;border-radius:0;background:linear-gradient(#f0f0f0,#d4d4d4)"></div>
<svg class="a" style="left:323px;top:831px" width="20" height="20"><circle cx="10" cy="10" r="6.5" fill="#e8e040"/><path d="M10 10L6.5 4.5A6.5 6.5 0 0 1 13.5 4.5ZM10 10L16.5 10A6.5 6.5 0 0 1 13.5 15.5ZM10 10L6.5 15.5A6.5 6.5 0 0 1 3.5 10Z" fill="#666"/><circle cx="10" cy="10" r="1.5" fill="#e8e040"/></svg>
<div class="a" style="left:343px;top:831px;width:21px;height:21px;border:1px solid #4a4a4a;border-radius:0 3px 3px 0;background:linear-gradient(#f0f0f0,#d4d4d4)"></div>
<svg class="a" style="left:343px;top:831px" width="20" height="20"><circle cx="10" cy="10" r="6" fill="#a0b8e0" stroke="#6080b0"/><circle cx="10" cy="10" r="3" fill="#e8eef8"/><path d="M6 10h8" stroke="#6080b0"/></svg>
<div class="a" style="left:383px;top:831px;width:61px;height:21px;border:1px solid #4a4a4a;border-radius:3px;background:linear-gradient(#d8d8d8,#cacaca)"></div>
<svg class="a" style="left:388px;top:836px" width="52" height="12"><path d="M5 3L2 6L5 9" stroke="#aaa" fill="none" stroke-width="1.3"/><path d="M47 3L50 6L47 9" stroke="#aaa" fill="none" stroke-width="1.3"/></svg>
<div class="t" style="left:409px;top:836px;font-size:12.5px;color:#000;">1</div>
<div class="a" style="left:8px;top:862px;width:158px;height:19px;background:#a9a9a9;border-radius:0 9px 0 0"></div>
<div class="a" style="left:8px;top:881px;width:158px;height:194px;background:#c0c0c0;"></div>
<div class="a" style="left:171px;top:863px;width:298px;height:19px;background:#a9a9a9;border-radius:9px 9px 0 0"></div>
<div class="a" style="left:171px;top:882px;width:298px;height:193px;background:#c0c0c0;"></div>
<div class="a" style="left:198px;top:865px;width:125px;height:17px;background:#c3c3c3;border-radius:9px 9px 0 0"></div>
<div class="t" style="left:212px;top:867px;font-size:12.5px;color:#000;">Material</div>
<div class="a" style="left:324px;top:867px;width:125px;height:15px;background:#8e8e8e;border-radius:8px 8px 0 0"></div>
<div class="t" style="left:337px;top:867px;font-size:12px;color:#c8c8c8;">Ramps</div>
<svg class="a" style="left:180px;top:868px" width="11" height="10"><path d="M0.5 1H10L5.2 9Z" fill="#fff"/></svg>
<div class="a" style="left:479px;top:867px;width:16px;height:205px;background:#acacac;border-radius:8px 8px 8px 8px"></div>
<div class="a" style="left:505px;top:867px;width:16px;height:205px;background:#acacac;border-radius:8px 8px 8px 8px"></div>
<svg class="a" style="left:482px;top:869px" width="10" height="11"><path d="M1 0.5V10L9.5 5.2Z" fill="#fff"/></svg>
<svg class="a" style="left:508px;top:869px" width="10" height="11"><path d="M1 0.5V10L9.5 5.2Z" fill="#fff"/></svg>
<div class="t" style="left:482px;top:890px;font-size:11px;color:#f4f4f4;">L</div>
<div class="t" style="left:482px;top:902px;font-size:11px;color:#f4f4f4;">P</div>
<div class="t" style="left:508px;top:890px;font-size:11px;color:#f4f4f4;">M</div>
<div class="t" style="left:508px;top:902px;font-size:11px;color:#f4f4f4;">T</div>
<div class="a" style="left:529px;top:863px;width:300px;height:19px;background:#a9a9a9;border-radius:9px 9px 0 0"></div>
<div class="a" style="left:529px;top:882px;width:300px;height:193px;background:#c0c0c0;"></div>
<div class="a" style="left:558px;top:866px;width:83px;height:16px;background:#8e8e8e;border-radius:8px 8px 0 0"></div>
<div class="t" style="left:571px;top:867px;font-size:12px;color:#c8c8c8;">Texture</div>
<div class="a" style="left:643px;top:865px;width:79px;height:17px;background:#c3c3c3;border-radius:9px 9px 0 0"></div>
<div class="t" style="left:654px;top:867px;font-size:12.5px;color:#000;">Map Input</div>
<div class="a" style="left:724px;top:866px;width:84px;height:16px;background:#8e8e8e;border-radius:8px 8px 0 0"></div>
<div class="t" style="left:738px;top:867px;font-size:12px;color:#c8c8c8;">Map To</div>
<svg class="a" style="left:538px;top:868px" width="11" height="10"><path d="M0.5 1H10L5.2 9Z" fill="#fff"/></svg>
<svg class="a" style="left:8px;top:889px" width="45" height="180" viewBox="0 0 45 180">
<defs><radialGradient id="sph" cx="20%" cy="50%" r="80%"><stop offset="0" stop-color="#5e5e5e"/><stop offset=".7" stop-color="#4a4a4a"/><stop offset="1" stop-color="#2e2e2e"/></radialGradient></defs>
<rect width="45" height="180" fill="#343434"/>
<path d="M0 0H45V5H0Z" fill="#2a2a2a"/>
<path d="M0 5H16V30L0 27Z" fill="#9a9a9a"/>
<path d="M16 5H45V25L16 30Z" fill="#363636"/>
<path d="M16 30L45 25V57L30 58Z" fill="#a2a2a2"/>
<path d="M32 87H45V118H30Z" fill="#a8a8a8"/>
<path d="M8 150L30 142L45 155V165L25 170Z" fill="#8a8a8a"/>
<path d="M25 170L45 165V180H20Z" fill="#606060"/>
<path d="M0 155L8 150L25 170L20 180H0Z" fill="#2a2a2a"/>
<path d="M0 25C18 28 31 45 34 83C36 115 26 138 0 155Z" fill="url(#sph)"/>
</svg>
<div class="a" style="left:91px;top:888px;width:25px;height:21px;border:1px solid #555;background:linear-gradient(#e8e8e8,#d0d0d0);border-radius:3px 3px 0 0"></div>
<svg class="a" style="left:92px;top:889px" width="23" height="19"><defs><linearGradient id="mi1" x1="0" y1="0" x2="1" y2="1"><stop offset="0" stop-color="#d8b0a8"/><stop offset="1" stop-color="#a87068"/></linearGradient></defs><rect x="6" y="3" width="12" height="13" fill="url(#mi1)" stroke="#e8e0e0" stroke-width="1"/></svg>
<div class="a" style="left:91px;top:908px;width:25px;height:21px;border:1px solid #555;background:linear-gradient(#8a8a90,#707078);border-radius:0"></div>
<svg class="a" style="left:92px;top:909px" width="23" height="19"><defs><radialGradient id="mi2" cx="40%" cy="35%" r="65%"><stop offset="0" stop-color="#fff8b0"/><stop offset=".5" stop-color="#c0a020"/><stop offset="1" stop-color="#3a3000"/></radialGradient></defs><circle cx="11.5" cy="10" r="7" fill="url(#mi2)"/></svg>
<div class="a" style="left:91px;top:928px;width:25px;height:21px;border:1px solid #555;background:linear-gradient(#e8e8e8,#d0d0d0);border-radius:0"></div>
<svg class="a" style="left:92px;top:929px" width="23" height="19"><path d="M5 6L11 3.5L18 6V14L11 17L5 14Z" fill="#9898b8"/><path d="M5 6L11 8.5L18 6M11 8.5V17" stroke="#c8c8e0" stroke-width="1" fill="none"/></svg>
<div class="a" style="left:91px;top:948px;width:25px;height:21px;border:1px solid #555;background:linear-gradient(#e8e8e8,#d0d0d0);border-radius:0"></div>
<svg class="a" style="left:92px;top:949px" width="23" height="19"><path d="M4.5 8L8 4H15L18.5 8Z" fill="#90b8d8"/><path d="M4.5 8H18.5L11.5 16Z" fill="#d89060"/></svg>
<div class="a" style="left:91px;top:968px;width:25px;height:21px;border:1px solid #555;background:linear-gradient(#e8e8e8,#d0d0d0);border-radius:0"></div>
<svg class="a" style="left:92px;top:969px" width="23" height="19"><path d="M10 4V9L8 15M10 9L14 14" stroke="#c8c090" stroke-width="2.2" fill="none"/><circle cx="10" cy="4" r="2" fill="#e0d890"/></svg>
<div class="a" style="left:91px;top:988px;width:25px;height:21px;border:1px solid #555;background:linear-gradient(#e8e8e8,#d0d0d0);border-radius:0 0 3px 3px"></div>
<svg class="a" style="left:92px;top:989px" width="23" height="19"><defs><radialGradient id="mi6" cx="40%" cy="35%" r="65%"><stop offset="0" stop-color="#f0f0b0"/><stop offset=".6" stop-color="#a8a850"/><stop offset="1" stop-color="#606020"/></radialGradient></defs><circle cx="11.5" cy="10" r="7" fill="url(#mi6)"/></svg>
<div class="a" style="left:91px;top:1045px;width:25px;height:21px;border:1px solid #555;border-radius:3px;background:linear-gradient(#e8e8e8,#d0d0d0)"></div>
<svg class="a" style="left:92px;top:1046px" width="23" height="19"><circle cx="11.5" cy="9.5" r="4.5" fill="none" stroke="#777" stroke-width="2.5"/></svg>
<div class="b" style="left:181px;top:920px;width:71px;height:19px;background:linear-gradient(#dadae6,#c8c8d6);color:#000;border-color:#4a4a4a;border-radius:3px 0 0 0;font-size:12.5px;line-height:19px;text-align:center;padding-left:0px">VCol Light</div>
<div class="b" style="left:251px;top:920px;width:70px;height:19px;background:linear-gradient(#dadae6,#c8c8d6);color:#000;border-color:#4a4a4a;border-radius:0;font-size:12.5px;line-height:19px;text-align:center;padding-left:0px">VCol Paint</div>
<div class="b" style="left:320px;top:920px;width:57px;height:19px;background:linear-gradient(#dadae6,#c8c8d6);color:#000;border-color:#4a4a4a;border-radius:0;font-size:12.5px;line-height:19px;text-align:center;padding-left:0px">TexFace</div>
<div class="b" style="left:376px;top:920px;width:20px;height:19px;background:linear-gradient(#dadae6,#c8c8d6);color:#000;border-color:#4a4a4a;border-radius:0;font-size:12.5px;line-height:19px;text-align:center;padding-left:0px">A</div>
<div class="b" style="left:395px;top:920px;width:64px;height:19px;background:linear-gradient(#dadae6,#c8c8d6);color:#000;border-color:#4a4a4a;border-radius:0 3px 0 0;font-size:12.5px;line-height:19px;text-align:center;padding-left:0px">Shadeless</div>
<div class="b" style="left:181px;top:938px;width:71px;height:20px;background:linear-gradient(#dadae6,#c8c8d6);color:#000;border-color:#4a4a4a;border-radius:0 0 0 3px;font-size:12.5px;line-height:20px;text-align:center;padding-left:0px">No Mist</div>
<div class="b" style="left:251px;top:938px;width:70px;height:20px;background:linear-gradient(#dadae6,#c8c8d6);color:#000;border-color:#4a4a4a;border-radius:0;font-size:12.5px;line-height:20px;text-align:center;padding-left:0px">Env</div>
<div class="b" style="left:320px;top:938px;width:57px;height:20px;background:linear-gradient(#dadae6,#c8c8d6);color:#000;border-color:#4a4a4a;border-radius:0;font-size:12.5px;line-height:20px;text-align:center;padding-left:0px">ObColor</div>
<div class="b" style="left:376px;top:938px;width:83px;height:20px;background:linear-gradient(#c4c4cc,#b8b8c0);color:#000;border-color:#4a4a4a;border-radius:0 0 3px 0;font-size:12.5px;line-height:20px;text-align:center;padding-left:0px">Shad A 1.00</div>
<div class="b" style="left:420px;top:889px;width:20px;height:20px;background:linear-gradient(#e8e8e8,#d0d0d0);color:#000;border-color:#4a4a4a;border-radius:3px 0 0 3px;font-size:12.5px;line-height:20px;text-align:center;padding-left:0px"></div>
<div class="b" style="left:439px;top:889px;width:20px;height:20px;background:linear-gradient(#e8e8e8,#d0d0d0);color:#000;border-color:#4a4a4a;border-radius:0 3px 3px 0;font-size:12.5px;line-height:20px;text-align:center;padding-left:0px"></div>
<svg class="a" style="left:420px;top:889px" width="39" height="20"><path d="M4 4H16M23 4H35" stroke="#f0a020" stroke-width="2.5"/><path d="M10 7L6 12H8.5V16H11.5V12H14Z" fill="#000"/><path d="M29 16L25 11H27.5V7H30.5V11H33Z" fill="#000"/></svg>
<div class="a" style="left:181px;top:984px;width:69px;height:57px;background:#fff;border:1px solid #000"></div>
<div class="a" style="left:182px;top:985px;width:67px;height:18px;background:#d4d4d4;"></div>
<div class="a" style="left:181px;top:1003px;width:69px;height:1px;background:#000;"></div>
<div class="a" style="left:181px;top:1022px;width:69px;height:1px;background:#000;"></div>
<div class="b" style="left:252px;top:984px;width:38px;height:20px;background:linear-gradient(#688282,#587070);color:#fff;border-color:#4a4a4a;border-radius:3px 3px 0 0;font-size:12.5px;line-height:20px;text-align:center;padding-left:0px">Col</div>
<div class="b" style="left:252px;top:1003px;width:38px;height:20px;background:linear-gradient(#cadcdc,#b4caca);color:#000;border-color:#4a4a4a;border-radius:0;font-size:12.5px;line-height:20px;text-align:center;padding-left:0px">Spe</div>
<div class="b" style="left:252px;top:1022px;width:38px;height:20px;background:linear-gradient(#cadcdc,#b4caca);color:#000;border-color:#4a4a4a;border-radius:0 0 3px 3px;font-size:12.5px;line-height:20px;text-align:center;padding-left:0px">Mir</div>
<div class="b" style="left:294px;top:984px;width:165px;height:20px;background:linear-gradient(#cacaca,#b6b6b6);color:#000;border-color:#4a4a4a;border-radius:3px 3px 0 0;font-size:12.5px;line-height:20px;text-align:left;padding-left:4px">R 0.800</div>
<div class="a" style="left:437px;top:990px;width:16px;height:8px;background:#c4c4c4;border:1px solid #9a9a9a;border-radius:1px"></div><div class="a" style="left:375px;top:989px;width:63px;height:10px;background:linear-gradient(#555,#7a7a7a 60%,#8a8a8a);border-radius:1px"></div><div class="a" style="left:436px;top:987px;width:3px;height:14px;background:#f4f4f4;border:1px solid #555"></div>

<div class="b" style="left:294px;top:1003px;width:165px;height:20px;background:linear-gradient(#cacaca,#b6b6b6);color:#000;border-color:#4a4a4a;border-radius:0;font-size:12.5px;line-height:20px;text-align:left;padding-left:4px">G 0.800</div>
<div class="a" style="left:437px;top:1009px;width:16px;height:8px;background:#c4c4c4;border:1px solid #9a9a9a;border-radius:1px"></div><div class="a" style="left:375px;top:1008px;width:63px;height:10px;background:linear-gradient(#555,#7a7a7a 60%,#8a8a8a);border-radius:1px"></div><div class="a" style="left:436px;top:1006px;width:3px;height:14px;background:#f4f4f4;border:1px solid #555"></div>

<div class="b" style="left:294px;top:1022px;width:165px;height:20px;background:linear-gradient(#cacaca,#b6b6b6);color:#000;border-color:#4a4a4a;border-radius:0 0 3px 3px;font-size:12.5px;line-height:20px;text-align:left;padding-left:4px">B 0.800</div>
<div class="a" style="left:437px;top:1028px;width:16px;height:8px;background:#c4c4c4;border:1px solid #9a9a9a;border-radius:1px"></div><div class="a" style="left:375px;top:1027px;width:63px;height:10px;background:linear-gradient(#555,#7a7a7a 60%,#8a8a8a);border-radius:1px"></div><div class="a" style="left:436px;top:1025px;width:3px;height:14px;background:#f4f4f4;border:1px solid #555"></div>

<div class="b" style="left:181px;top:1047px;width:38px;height:19px;background:linear-gradient(#688282,#587070);color:#fff;border-color:#4a4a4a;border-radius:3px 0 0 3px;font-size:12.5px;line-height:19px;text-align:center;padding-left:0px">RGB</div>
<div class="b" style="left:218px;top:1047px;width:36px;height:19px;background:linear-gradient(#cadcdc,#b4caca);color:#000;border-color:#4a4a4a;border-radius:0;font-size:12.5px;line-height:19px;text-align:center;padding-left:0px">HSV</div>
<div class="b" style="left:253px;top:1047px;width:37px;height:19px;background:linear-gradient(#cadcdc,#b4caca);color:#000;border-color:#4a4a4a;border-radius:0 3px 3px 0;font-size:12.5px;line-height:19px;text-align:center;padding-left:0px">DYN</div>
<div class="b" style="left:294px;top:1047px;width:165px;height:19px;background:linear-gradient(#cacaca,#b6b6b6);color:#000;border-color:#4a4a4a;border-radius:3px;font-size:12.5px;line-height:19px;text-align:left;padding-left:4px">A 1.000</div>
<div class="a" style="left:375px;top:1051px;width:77px;height:10px;background:linear-gradient(#555,#7a7a7a 60%,#8a8a8a);border-radius:1px"></div><div class="a" style="left:450px;top:1049px;width:3px;height:14px;background:#f4f4f4;border:1px solid #555"></div>

<div class="b" style="left:548px;top:888px;width:43px;height:18px;background:linear-gradient(#cadcdc,#b4caca);color:#000;border-color:#4a4a4a;border-radius:3px 0 0 0;font-size:12.5px;line-height:18px;text-align:center;padding-left:0px">Glob</div>
<div class="b" style="left:590px;top:888px;width:72px;height:18px;background:linear-gradient(#cadcdc,#b4caca);color:#000;border-color:#4a4a4a;border-radius:0;font-size:12.5px;line-height:18px;text-align:center;padding-left:0px">Object</div>
<div class="b" style="left:661px;top:888px;width:149px;height:18px;background:#c4c4c4;color:#000;border-color:#4a4a4a;border-radius:0 3px 0 0;font-size:12.5px;line-height:18px;text-align:left;padding-left:2px">Ob:</div>
<div class="b" style="left:548px;top:905px;width:39px;height:20px;background:linear-gradient(#cadcdc,#b4caca);color:#000;border-color:#4a4a4a;border-radius:0;font-size:12.5px;line-height:20px;text-align:center;padding-left:0px">UV</div>
<div class="b" style="left:586px;top:905px;width:53px;height:20px;background:linear-gradient(#688282,#587070);color:#fff;border-color:#4a4a4a;border-radius:0;font-size:12.5px;line-height:20px;text-align:center;padding-left:0px">Orco</div>
<div class="b" style="left:638px;top:905px;width:47px;height:20px;background:linear-gradient(#cadcdc,#b4caca);color:#000;border-color:#4a4a4a;border-radius:0;font-size:12.5px;line-height:20px;text-align:center;padding-left:0px">Stick</div>
<div class="b" style="left:684px;top:905px;width:44px;height:20px;background:linear-gradient(#cadcdc,#b4caca);color:#000;border-color:#4a4a4a;border-radius:0;font-size:12.5px;line-height:20px;text-align:center;padding-left:0px">Win</div>
<div class="b" style="left:727px;top:905px;width:42px;height:20px;background:linear-gradient(#cadcdc,#b4caca);color:#000;border-color:#4a4a4a;border-radius:0;font-size:12.5px;line-height:20px;text-align:center;padding-left:0px">Nor</div>
<div class="b" style="left:768px;top:905px;width:42px;height:20px;background:linear-gradient(#cadcdc,#b4caca);color:#000;border-color:#4a4a4a;border-radius:0;font-size:12.5px;line-height:20px;text-align:center;padding-left:0px">Refl</div>
<div class="b" style="left:548px;top:925px;width:68px;height:19px;background:linear-gradient(#cadcdc,#b4caca);color:#000;border-color:#4a4a4a;border-radius:0 0 0 3px;font-size:12.5px;line-height:19px;text-align:center;padding-left:0px">Stress</div>
<div class="b" style="left:615px;top:925px;width:65px;height:19px;background:linear-gradient(#cadcdc,#b4caca);color:#000;border-color:#4a4a4a;border-radius:0 0 3px 0;font-size:12.5px;line-height:19px;text-align:center;padding-left:0px">Tangent</div>
<div class="b" style="left:727px;top:925px;width:83px;height:19px;background:linear-gradient(#cadcdc,#b4caca);color:#000;border-color:#4a4a4a;border-radius:3px;font-size:12.5px;line-height:19px;text-align:center;padding-left:0px">From Dupli</div>
<div class="b" style="left:548px;top:948px;width:48px;height:19px;background:linear-gradient(#688282,#587070);color:#fff;border-color:#4a4a4a;border-radius:3px 0 0 0;font-size:12.5px;line-height:19px;text-align:center;padding-left:0px">Flat</div>
<div class="b" style="left:595px;top:948px;width:49px;height:19px;background:linear-gradient(#cadcdc,#b4caca);color:#000;border-color:#4a4a4a;border-radius:0 3px 0 0;font-size:12.5px;line-height:19px;text-align:center;padding-left:0px">Cube</div>
<div class="b" style="left:548px;top:966px;width:48px;height:19px;background:linear-gradient(#cadcdc,#b4caca);color:#000;border-color:#4a4a4a;border-radius:0 0 0 3px;font-size:12.5px;line-height:19px;text-align:center;padding-left:0px">Tube</div>
<div class="b" style="left:595px;top:966px;width:49px;height:19px;background:linear-gradient(#cadcdc,#b4caca);color:#000;border-color:#4a4a4a;border-radius:0 0 3px 0;font-size:12.5px;line-height:19px;text-align:center;padding-left:0px">Sphe</div>
<div class="b" style="left:548px;top:1010px;width:24px;height:19px;background:linear-gradient(#cadcdc,#b4caca);color:#000;border-color:#4a4a4a;border-radius:0;font-size:12.5px;line-height:19px;text-align:center;padding-left:0px"></div>
<div class="b" style="left:571px;top:1010px;width:26px;height:19px;background:linear-gradient(#688282,#587070);color:#fff;border-color:#4a4a4a;border-radius:0;font-size:12.5px;line-height:19px;text-align:center;padding-left:0px">X</div>
<div class="b" style="left:596px;top:1010px;width:25px;height:19px;background:linear-gradient(#cadcdc,#b4caca);color:#000;border-color:#4a4a4a;border-radius:0;font-size:12.5px;line-height:19px;text-align:center;padding-left:0px">Y</div>
<div class="b" style="left:620px;top:1010px;width:25px;height:19px;background:linear-gradient(#cadcdc,#b4caca);color:#000;border-color:#4a4a4a;border-radius:0;font-size:12.5px;line-height:19px;text-align:center;padding-left:0px">Z</div>
<div class="b" style="left:548px;top:1028px;width:24px;height:19px;background:linear-gradient(#cadcdc,#b4caca);color:#000;border-color:#4a4a4a;border-radius:0;font-size:12.5px;line-height:19px;text-align:center;padding-left:0px"></div>
<div class="b" style="left:571px;top:1028px;width:26px;height:19px;background:linear-gradient(#cadcdc,#b4caca);color:#000;border-color:#4a4a4a;border-radius:0;font-size:12.5px;line-height:19px;text-align:center;padding-left:0px">X</div>
<div class="b" style="left:596px;top:1028px;width:25px;height:19px;background:linear-gradient(#688282,#587070);color:#fff;border-color:#4a4a4a;border-radius:0;font-size:12.5px;line-height:19px;text-align:center;padding-left:0px">Y</div>
<div class="b" style="left:620px;top:1028px;width:25px;height:19px;background:linear-gradient(#cadcdc,#b4caca);color:#000;border-color:#4a4a4a;border-radius:0;font-size:12.5px;line-height:19px;text-align:center;padding-left:0px">Z</div>
<div class="b" style="left:548px;top:1046px;width:24px;height:19px;background:linear-gradient(#cadcdc,#b4caca);color:#000;border-color:#4a4a4a;border-radius:0;font-size:12.5px;line-height:19px;text-align:center;padding-left:0px"></div>
<div class="b" style="left:571px;top:1046px;width:26px;height:19px;background:linear-gradient(#cadcdc,#b4caca);color:#000;border-color:#4a4a4a;border-radius:0;font-size:12.5px;line-height:19px;text-align:center;padding-left:0px">X</div>
<div class="b" style="left:596px;top:1046px;width:25px;height:19px;background:linear-gradient(#cadcdc,#b4caca);color:#000;border-color:#4a4a4a;border-radius:0;font-size:12.5px;line-height:19px;text-align:center;padding-left:0px">Y</div>
<div class="b" style="left:620px;top:1046px;width:25px;height:19px;background:linear-gradient(#688282,#587070);color:#fff;border-color:#4a4a4a;border-radius:0;font-size:12.5px;line-height:19px;text-align:center;padding-left:0px">Z</div>
<div class="b" style="left:687px;top:948px;width:123px;height:19px;background:linear-gradient(#c0c0c0,#b0b0b0);color:#000;border-color:#5a5a5a;border-radius:0;font-size:12.5px;line-height:19px;text-align:center;padding-left:0px">ofsX 0.000</div>
<div class="b" style="left:687px;top:966px;width:123px;height:20px;background:linear-gradient(#c0c0c0,#b0b0b0);color:#000;border-color:#5a5a5a;border-radius:0;font-size:12.5px;line-height:20px;text-align:center;padding-left:0px">ofsY 0.000</div>
<div class="b" style="left:687px;top:985px;width:123px;height:20px;background:linear-gradient(#c0c0c0,#b0b0b0);color:#000;border-color:#5a5a5a;border-radius:0;font-size:12.5px;line-height:20px;text-align:center;padding-left:0px">ofsZ 0.000</div>
<div class="b" style="left:687px;top:1010px;width:123px;height:19px;background:linear-gradient(#c0c0c0,#b0b0b0);color:#000;border-color:#5a5a5a;border-radius:0;font-size:12.5px;line-height:19px;text-align:center;padding-left:0px">sizeX 1.00</div>
<div class="b" style="left:687px;top:1028px;width:123px;height:19px;background:linear-gradient(#c0c0c0,#b0b0b0);color:#000;border-color:#5a5a5a;border-radius:0;font-size:12.5px;line-height:19px;text-align:center;padding-left:0px">sizeY 1.00</div>
<div class="b" style="left:687px;top:1046px;width:123px;height:20px;background:linear-gradient(#c0c0c0,#b0b0b0);color:#000;border-color:#5a5a5a;border-radius:0;font-size:12.5px;line-height:20px;text-align:center;padding-left:0px">sizeZ 1.00</div>
<svg class="a" style="left:687px;top:948px" width="123" height="118"><g fill="#8c8c8c"><path d="M8 6.0L4.5 9.5L8 13.0Z"/><path d="M115 6.0L118.5 9.5L115 13.0Z"/><path d="M8 24.5L4.5 28L8 31.5Z"/><path d="M115 24.5L118.5 28L115 31.5Z"/><path d="M8 43.0L4.5 46.5L8 50.0Z"/><path d="M115 43.0L118.5 46.5L115 50.0Z"/><path d="M8 66.5L4.5 70L8 73.5Z"/><path d="M115 66.5L118.5 70L115 73.5Z"/><path d="M8 85.0L4.5 88.5L8 92.0Z"/><path d="M115 85.0L118.5 88.5L115 92.0Z"/><path d="M8 103.5L4.5 107L8 110.5Z"/><path d="M115 103.5L118.5 107L115 110.5Z"/></g></svg>
</body></html>
